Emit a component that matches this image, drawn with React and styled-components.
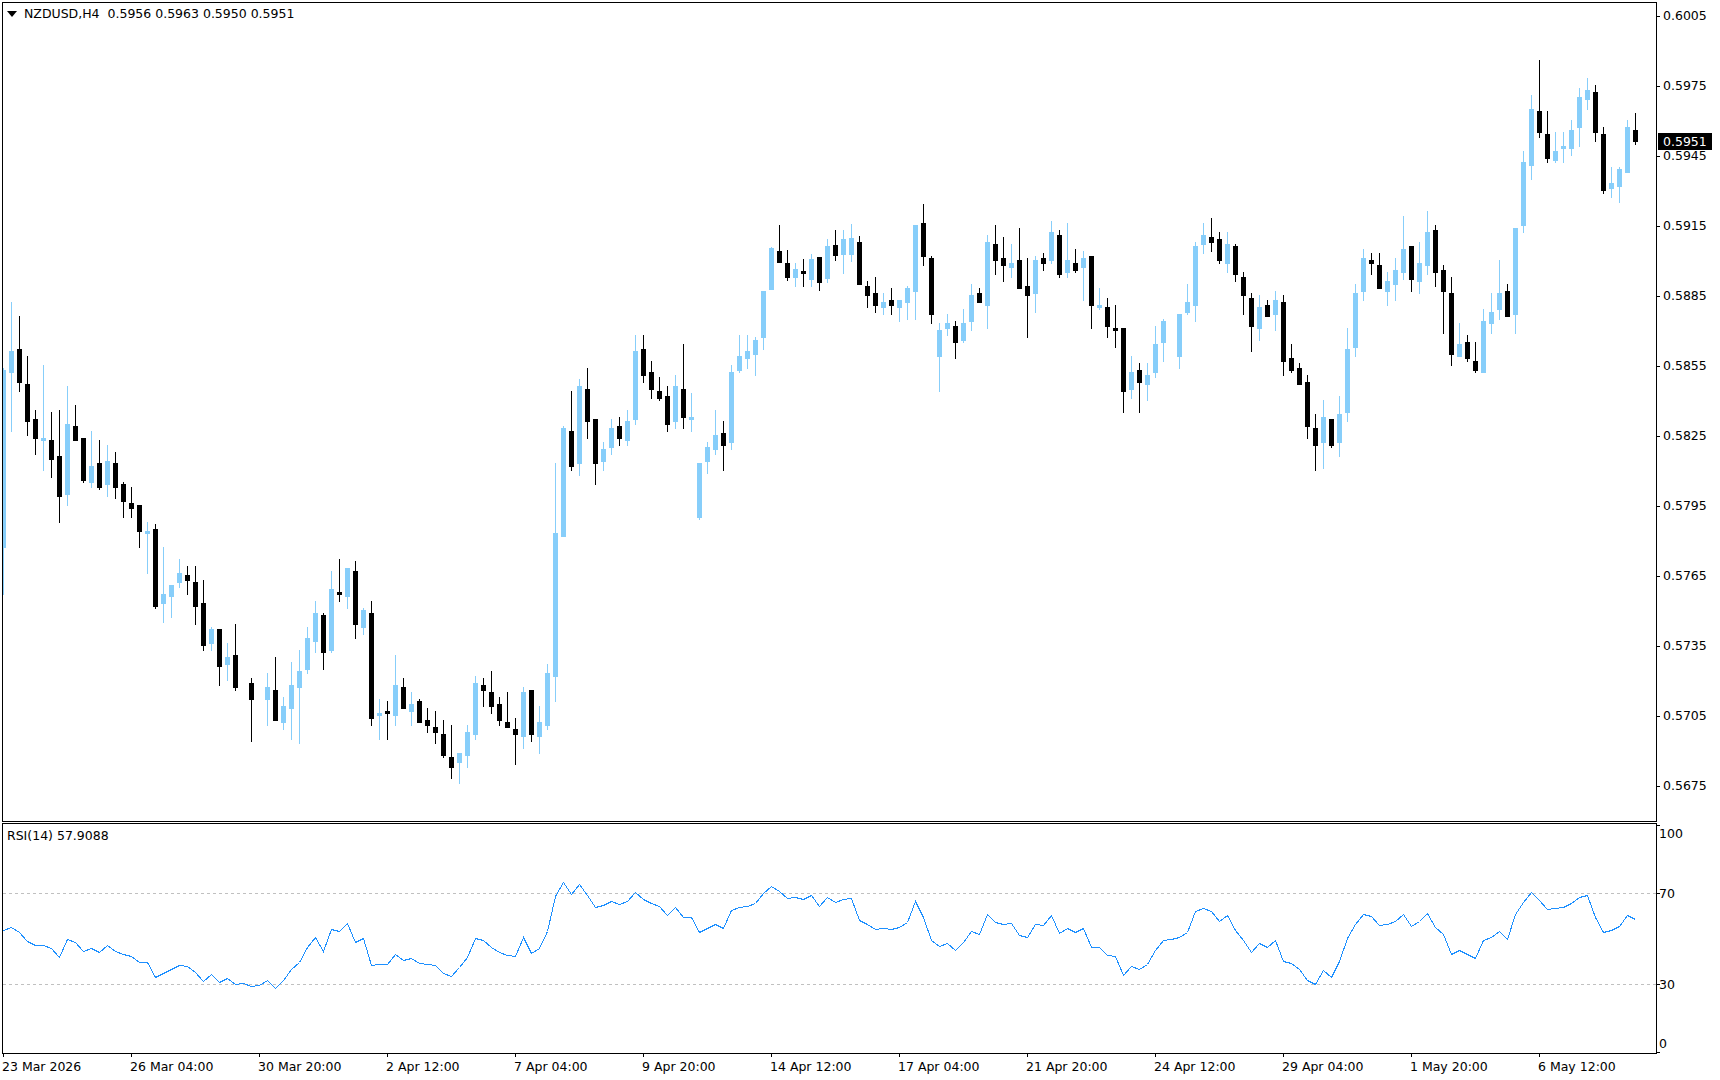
import React from 'react'
import styled, { createGlobalStyle } from 'styled-components'

const GlobalStyle = createGlobalStyle`
    html, body {
        margin: 0;
        background: #fff;
        overflow: hidden;
    }
    body {
        font-family: "DejaVu Sans", Tahoma, sans-serif;
        font-size: 12.5px;
        color: #000;
    }
`

const Page = styled.div`
    display: flex;
    flex-direction: column;
    width: 1720px;
    height: 1080px;
    padding: 2px 0 0 2px;
    box-sizing: border-box;
`

const Pane = styled.section`
    display: grid;
    grid-template-columns: 1655px 63px;
    grid-template-rows: ${props => props.$height}px;
    margin-bottom: ${props => props.$gap || 0}px;
`

const Plot = styled.div`
    position: relative;
    border: 1px solid #000;
    overflow: hidden;
    line-height: 14px;
    white-space: pre;
`

const Drawing = styled.svg`
    display: block;
    shape-rendering: crispEdges;
`

const Legend = styled.div`
    position: absolute;
    top: ${props => props.$top}px;
    left: ${props => props.$left}px;
    display: flex;
    align-items: center;
`

const Arrow = styled.span`
    width: 0;
    height: 0;
    margin-right: 7px;
    border-left: 5px solid transparent;
    border-right: 5px solid transparent;
    border-top: 6px solid #000;
`

const PriceAxis = styled.div`
    position: relative;
    padding-top: 14px;
`

const RsiAxis = styled.div`
    padding-top: 2px;
`

const AxisRow = styled.div`
    display: flex;
    align-items: flex-start;
    height: ${props => props.$height}px;
`

const Tick = styled.span`
    flex: none;
    width: 3px;
    height: 1px;
    background: #000;
`

const AxisLabel = styled.span`
    margin-top: ${props => props.$shift}px;
    margin-left: ${props => props.$indent}px;
    line-height: 14px;
`

const LastPrice = styled.div`
    position: absolute;
    top: 131px;
    left: 1px;
    width: 54px;
    height: 17px;
    padding-left: 5px;
    box-sizing: border-box;
    background: #000;
    color: #fff;
    line-height: 17px;
`

const TimeAxis = styled.div`
    display: flex;
    padding-left: 1px;
`

const TimeCell = styled.div`
    flex: none;
    width: 128px;
    white-space: nowrap;
`

const TimeTick = styled.div`
    width: 1px;
    height: 3px;
    margin-bottom: 3px;
    background: #000;
`

const TimeLabel = styled.span`
    display: block;
    margin-left: -1px;
    line-height: 14px;
`

const SKY = '#87cefa'

// candles read off the chart, "u/d high bodyTop bodyBottom low" in thirds of a px from base
const candleBlocks = [
    [270, 'u295 300 834 975,u96 243 309 486,d138 237 339 366,d258 342 456 498,d420 447 507 555,u285 504 513 603,d426 510 570 624,d420 558 681 759,u348 462 675 708,d405 468 513 513,d504 504 633 639,u483 588 639 654,d510 579 654 660,u525 573 645 681,d546 579 654 687,d636 642 696 744,d651 699 717 744,d705 705 786 834,u756 783 792 912,d762 777 1011 1017'],
    [540, 'u21 162 192 249,u135 135 171 234,u57 99 129 144,d78 105 123 165,d78 126 201 255,d120 189 318 333,u261 267 312 333,d267 267 381 438,u309 351 375 423,d252 345 444 453,x,d414 429 480 606,x,u399 441 480 558,d351 450 543 543,u471 498 549 570,u366 435 507 600,u330 393 444 612,u261 294 390 402,u183 219 306 339,d219 225 339 390,u93 147 333 339,d57 156 165 186,u84 84 171 207,d63 93 255 297,u204 210 264 285,d183 219 537 558,u477 519 528 600,d483 513 522 600,u345 435 528 558,d414 441 507 507,u456 492 516 558,d477 483 549 549,d504 540 558 579'],
    [600, 'd333 381 399 432,d360 402 468 474,d375 471 504 537,u459 459 489 552,u375 396 468 504,u228 249 405 420,d234 255 273 321,d213 276 321 342,d291 312 363 378,d276 366 384 384,d354 387 405 495,u261 276 411 447,d270 270 405 426,u318 366 411 462,u192 219 378 390'],
    [320, 'u429 639 1071 1146,u318 324 651 651,d213 333 441 453,u177 198 432 468,d144 207 306 357,d297 297 432 495,u366 387 426 453,u297 324 384 405,d291 318 357 378,u270 303 363 378,u45 93 300 315,d45 87 168 189,d123 156 210 237,d171 213 237 243,d198 228 315 336,u165 198 306 327,d72 207 294 327,u219 291 300 336,u429 429 594 600,u366 381 426 462,u270 345 390 405,d303 339 378 453,u135 156 369 390,u45 108 153 159,u45 93 117 147,u51 60 105 168,u-87 -87 54 90'],
    [0, 'u741 744 870 870,d675 753 789 789,d750 789 834 843,u789 807 834 861,d777 813 822 861,u762 777 840 861,d771 771 849 873,u717 738 837 849,d690 735 768 783,u690 717 765 822,u672 714 765 786,d708 726 855 855'],
    [190, 'd273 288 318 354,d261 309 348 369,u309 336 354 375,d294 330 348 375,u330 330 354 396,u288 294 339 390,u105 105 306 390,d42 99 201 228,d198 204 375 402,u399 420 501 606,u372 399 417 438,d393 408 459 507,u357 399 453 459,u282 315 396 423,d294 309 339 339,u135 156 348 417,d105 162 213 255,d141 204 228 276,u162 219 234 264,d114 210 297 297,d204 288 318 444,u198 210 312 369,d189 204 222 243,u93 126 213 222,d120 135 255 264,u99 210 249 264,d177 219 243 249,u183 204 234 333,d198 198 348 417,u294 345 354 360,d324 351 411 444,d345 414 423 474,d414 414 606 669,u498 546 600 627,d519 540 579 669,u519 555 585 633,u408 462 549 564,u387 393 459 516,x,u372 372 501 537,u282 336 369 375,u156 168 348 396,u99 135 165 192,d84 141 159 186,d126 147 213 222,u126 162 222 249,d162 168 255 276,d246 261 318 375,d309 324 411 486,u315 351 417 453,d330 345 381 381,u303 330 375 423,d315 336 516 558'],
    [210, 'd402 444 483 489,d459 474 525 525,d495 516 651 687,d612 654 708 783,u570 621 699 777,d627 627 708 714,u558 612 699 741,u354 417 609 636,u222 249 414 441,u117 144 246 273,d129 150 162 195,d129 165 237 237,u186 213 246 288,u144 180 225 273,u18 117 189 210,d108 108 210 246,u96 159 216 252,u3 66 168 195,d45 60 189 231,d165 180 246 372,d201 249 435 468,u339 402 441 441,d375 396 447 456,d396 453 483 489,u297 333 489 489,u249 306 342 372,u150 249 300 330,d222 243 321 321'],
    [0, 'u684 684 945 1002,u453 486 678 699,u285 327 498 540,d180 333 399 414,d333 402 477 489,u396 453 483 489,u396 438 447 489,u360 390 447 468,u264 291 384 441,u234 270 300 330,d255 276 399 426,d381 402 573 582,u501 549 567 594,u501 507 561 609,u360 381 519 519,d339 390 426 435'],
]

const candles = candleBlocks.flatMap(([base, text]) =>
    text.split(',').map(item => {
        if (item === 'x') return null
        const [high, top, bottom, low] = item.slice(1).split(' ').map(v => base + Number(v) / 3)
        return { up: item[0] === 'u', high, top, bottom, low }
    })
)

const rsiBlocks = [
    [810, '360 351 366 393 405 405 414 441 387 396 423 414 426 405 423 432 438 456 456 501 489 477 465 468 486 513 492 516 504 522 519 528 525 510 534 510 477 456 411 381 423 357 363 339 396 384 465 462 462 432 450 444 459 462'],
    [860, '316 339 347 322 290 235 241 262 276 285 289 232 280 265 214 109 67 103 73 106 142 136 124 133 124 95 118 130 139 166 142 172 172 217 205 193 205 151 142 139 130 100 79 94 115 112 118 106 139 112 127 118 115 181'],
    [860, '193 208 205 208 202 187 124 172 241 259 250 271 247 214 223 163 187 193 190 226 232 193 196 166 220 205 217 205 262 262 286 289 346 319 328 313 271 241 238 232 217 154 145 154 184 166 211 241 277 250 262 241 304 310'],
    [810, '477 510 522 481 501 453 384 342 312 318 345 342 333 313 348 333 309 351 373 432 420 432 444 390 381 363 387 312 276 246 270 297 295 291 279 261 255 321 366 360 348 315 328'],
]

const rsiPoints = rsiBlocks
    .flatMap(([base, text]) => text.split(' ').map(v => base + Number(v) / 3))
    .map((y, i) => `${3 + 8 * i + 0.5},${Math.round(y) + 0.5}`)
    .join(' ')

const prices = ['0.6005', '0.5975', '0.5945', '0.5915', '0.5885', '0.5855', '0.5825', '0.5795', '0.5765', '0.5735', '0.5705', '0.5675']

const rsiScale = [
    { label: '100', height: 68, shift: 2 },
    { label: '70', height: 91, shift: -6 },
    { label: '30', height: 68, shift: -6 },
    { label: '0', height: 1, shift: -15 },
]

const times = ['23 Mar 2026', '26 Mar 04:00', '30 Mar 20:00', '2 Apr 12:00', '7 Apr 04:00', '9 Apr 20:00', '14 Apr 12:00', '17 Apr 04:00', '21 Apr 20:00', '24 Apr 12:00', '29 Apr 04:00', '1 May 20:00', '6 May 12:00']

function Candle({ candle, index }) {
    const color = candle.up ? SKY : '#000'
    return (
        <g fill={color}>
            <rect x={3 + 8 * index} y={candle.high} width="1" height={candle.low - candle.high} />
            <rect x={1 + 8 * index} y={candle.top} width="5" height={candle.bottom - candle.top} />
        </g>
    )
}

export default function App() {
    return (
        <Page>
            <GlobalStyle />
            <Pane $height={820} $gap={1}>
                <Plot>
                    <Drawing width="1653" height="818" viewBox="3 3 1653 818">
                        {candles.map((candle, i) => candle && <Candle key={i} candle={candle} index={i} />)}
                    </Drawing>
                    <Legend $top={4} $left={4}>
                        <Arrow />
                        <span>NZDUSD,H4  0.5956 0.5963 0.5950 0.5951</span>
                    </Legend>
                </Plot>
                <PriceAxis>
                    {prices.map(price => (
                        <AxisRow key={price} $height={70}>
                            <Tick />
                            <AxisLabel $shift={-7} $indent={3}>{price}</AxisLabel>
                        </AxisRow>
                    ))}
                    <LastPrice>0.5951</LastPrice>
                </PriceAxis>
            </Pane>
            <Pane $height={231}>
                <Plot>
                    <Drawing width="1653" height="229" viewBox="3 824 1653 229">
                        <line x1="3" x2="1656" y1="893.5" y2="893.5" stroke="#c0c0c0" strokeDasharray="3 3" />
                        <line x1="3" x2="1656" y1="984.5" y2="984.5" stroke="#c0c0c0" strokeDasharray="3 3" />
                        <polyline points={rsiPoints} fill="none" stroke="#1e90ff" strokeWidth="1" />
                    </Drawing>
                    <Legend $top={5} $left={4}>
                        <span>RSI(14) 57.9088</span>
                    </Legend>
                </Plot>
                <RsiAxis>
                    {rsiScale.map(row => (
                        <AxisRow key={row.label} $height={row.height}>
                            <Tick />
                            <AxisLabel $shift={row.shift} $indent={-1}>{row.label}</AxisLabel>
                        </AxisRow>
                    ))}
                </RsiAxis>
            </Pane>
            <TimeAxis>
                {times.map(time => (
                    <TimeCell key={time}>
                        <TimeTick />
                        <TimeLabel>{time}</TimeLabel>
                    </TimeCell>
                ))}
            </TimeAxis>
        </Page>
    )
}
